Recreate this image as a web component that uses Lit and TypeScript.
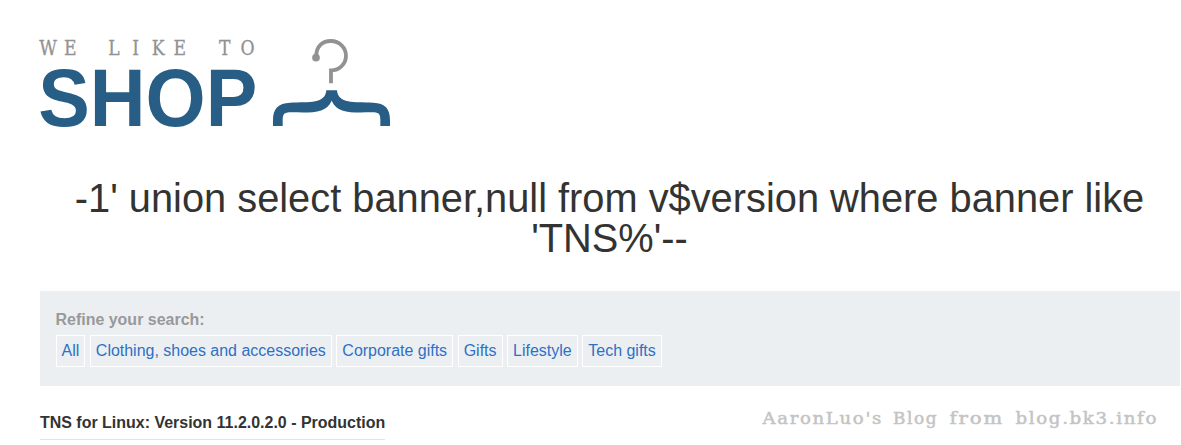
import { LitElement, html, css } from "lit";
import { customElement } from "lit/decorators.js";

@customElement("shop-logo")
class ShopLogo extends LitElement {
  static styles = css`
    :host { display: block; width: 352px; height: 92px; }
    svg { display: block; overflow: visible; }
    .tag { font: 20.5px "DejaVu Serif", serif; fill: #929292; stroke: #929292; stroke-width: 0.3; text-anchor: middle; }
    .name { font: bold 81px "Liberation Sans", Arial, sans-serif; fill: #285e85; }
  `;
  render() {
    return html`<svg width="352" height="92" viewBox="0 0 352 92" role="img" aria-label="We like to shop">
      <text class="tag" y="16.8" transform="scale(.84 1)" x="9.5 36 62 88 114 140.7 166.5 194 220 247">WE LIKE TO</text>
      <text class="name" x="-1.8" y="87.8" textLength="219" lengthAdjust="spacingAndGlyphs">SHOP</text>
      <g transform="translate(220 -8) scale(.33333)">
        <path d="M169 79C168 48 188 33 213 33A45 44 0 0 1 213 121V160" fill="none" stroke="#929292" stroke-width="11.5"/>
        <circle cx="168" cy="83" r="11.5" fill="#929292"/>
        <path d="M39 288V270C39 235 55 220 90 218C150 216 195 222 199 181H231C235 222 280 216 340 218C375 220 390 235 390 270V288H361V270C361 250 355 247 335 247C270 248 232 250 215 212C198 250 160 248 95 247C75 247 68 250 68 270V288Z" fill="#285e85"/>
      </g>
    </svg>`;
  }
}

@customElement("app-root")
class AppRoot extends LitElement {
  static styles = css`
    :host { display: block; box-sizing: border-box; height: 445px; overflow: hidden; padding: 38px 1px 0 40px; background: #fff; color: #333332; font: 15.98px/20px "Liberation Sans", Arial, sans-serif; }
    h1 { margin: 48px 1px 0 0; font-size: 39.8px; line-height: 40px; font-weight: 400; text-align: center; }
    .filters { box-sizing: border-box; height: 95px; margin-top: 33px; padding: 19px 15.5px; background: #ebeff2; }
    .label { display: block; color: #999; font-weight: 700; }
    .links { display: flex; gap: 4.6px; margin-top: 5px; }
    a { box-sizing: border-box; height: 32px; padding: 5px; border: 1px solid #fff; color: #2f70c4; text-decoration: none; white-space: nowrap; }
    .results { display: flex; justify-content: space-between; align-items: flex-start; margin-top: 27px; }
    .banner { box-sizing: border-box; height: 27px; border-bottom: 1px solid #e3e3e3; font-weight: 700; white-space: nowrap; }
    .credit { width: 418px; height: 26px; margin-top: -6px; }
    .credit text { font: 16.5px "DejaVu Serif", serif; letter-spacing: 1.5px; fill: #c4c4c4; stroke: #c4c4c4; stroke-width: 0.5; }
  `;
  links = ["All", "Clothing, shoes and accessories", "Corporate gifts", "Gifts", "Lifestyle", "Tech gifts"];
  render() {
    return html`
      <shop-logo></shop-logo>
      <h1>-1' union select banner,null from v$version where banner like 'TNS%'--</h1>
      <section class="filters">
        <span class="label">Refine your search:</span>
        <nav class="links">${this.links.map((name) => html`<a href="#">${name}</a>`)}</nav>
      </section>
      <div class="results">
        <span class="banner">TNS for Linux: Version 11.2.0.2.0 - Production</span>
        <svg class="credit" viewBox="0 0 418 26">
          <text x="0.5" y="17" textLength="120.5" lengthAdjust="spacingAndGlyphs">AaronLuo's</text>
          <text x="131" y="17" textLength="45" lengthAdjust="spacingAndGlyphs">Blog</text>
          <text x="187.5" y="17" textLength="54.5" lengthAdjust="spacingAndGlyphs">from</text>
          <text x="253.5" y="17" textLength="142.5" lengthAdjust="spacingAndGlyphs">blog.bk3.info</text>
        </svg>
      </div>`;
  }
}
